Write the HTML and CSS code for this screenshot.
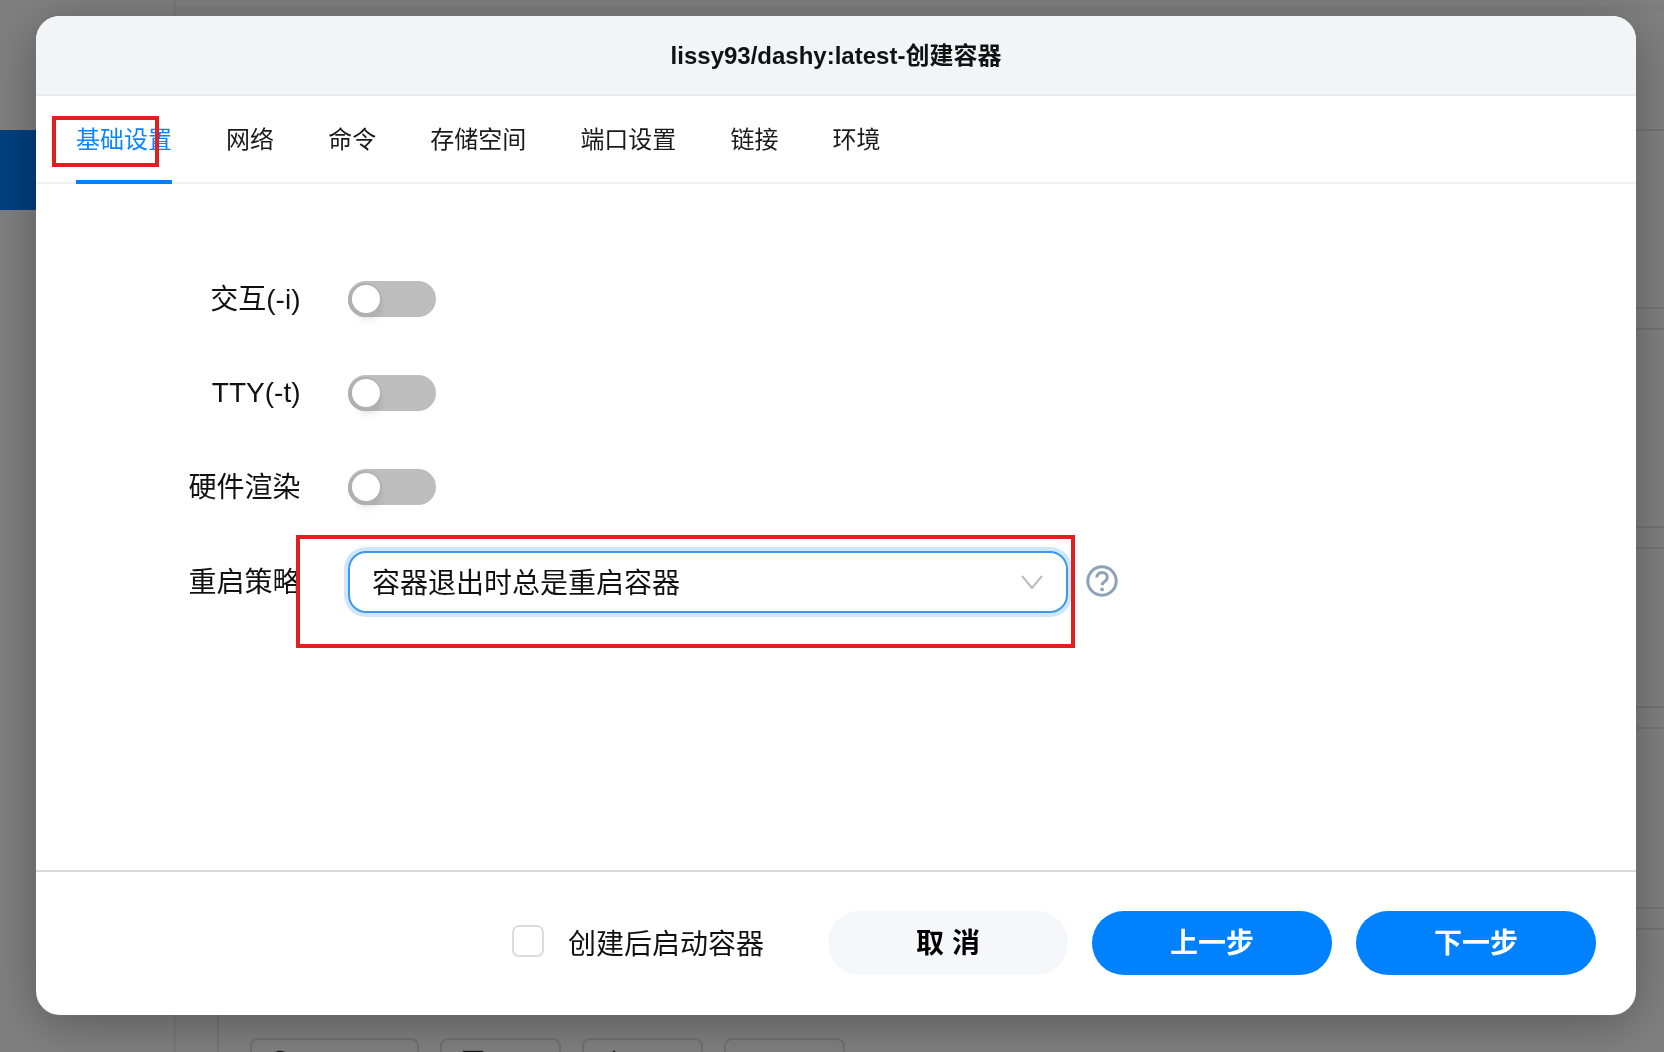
FILE: index.html
```html
<!DOCTYPE html>
<html lang="zh-CN">
<head>
<meta charset="utf-8">
<title>创建容器</title>
<link rel="stylesheet" href="styles.css">
</head>
<body>
<div class="page">
  <aside class="sidebar">
    <div class="nav-active"></div>
  </aside>
  <main class="main">
    <div class="top-strip"></div>
    <div class="rows">
      <div class="row-head"></div>
      <div class="row row-1"></div>
      <div class="row row-2"></div>
      <div class="row row-3"></div>
      <div class="row row-4"></div>
    </div>
    <div class="actions">
      <div class="ghost g1"><svg class="ghost-icon" viewBox="0 0 24 24"><circle cx="12" cy="12" r="9"/></svg></div>
      <div class="ghost g2"><svg class="ghost-icon" viewBox="0 0 24 24"><rect x="3" y="3" width="18" height="18"/></svg></div>
      <div class="ghost g3"><svg class="ghost-icon" viewBox="0 0 24 24"><path d="M12 3v18M5 10l7-7 7 7"/></svg></div>
      <div class="ghost g4"><svg class="ghost-icon faint" viewBox="0 0 24 24"><path d="M12 3v18"/></svg></div>
    </div>
  </main>
</div>

<div class="backdrop"></div>

<section class="modal">
  <header class="modal-head">lissy93/dashy:latest-创建容器</header>
  <nav class="tabs">
    <a class="tab active">基础设置</a>
    <a class="tab">网络</a>
    <a class="tab">命令</a>
    <a class="tab">存储空间</a>
    <a class="tab">端口设置</a>
    <a class="tab">链接</a>
    <a class="tab">环境</a>
  </nav>
  <div class="form">
    <div class="field">
      <label class="field-label">交互(-i)</label>
      <span class="switch"><span class="knob"></span></span>
    </div>
    <div class="field">
      <label class="field-label label-latin">TTY(-t)</label>
      <span class="switch"><span class="knob"></span></span>
    </div>
    <div class="field">
      <label class="field-label">硬件渲染</label>
      <span class="switch"><span class="knob"></span></span>
    </div>
    <div class="field field-select">
      <label class="field-label">重启策略</label>
      <div class="select">
        <span class="select-value">容器退出时总是重启容器</span>
        <svg class="chevron" viewBox="0 0 22 14"><path d="M1 1l10 12L21 1"/></svg>
      </div>
      <svg class="help" viewBox="0 0 32 32">
        <circle cx="16" cy="16" r="14.2"/>
        <path d="M10.8 12.6c0-3 2.3-5 5.3-5s5.2 1.9 5.2 4.6c0 2-1 3.1-2.7 4.2-1.7 1.1-2.5 1.9-2.5 3.9"/>
        <circle class="help-dot" cx="16.1" cy="24.4" r="1.9"/>
      </svg>
    </div>
  </div>
  <footer class="modal-foot">
    <span class="check"></span>
    <span class="check-text">创建后启动容器</span>
    <button class="btn btn-cancel">取 消</button>
    <button class="btn btn-primary">上一步</button>
    <button class="btn btn-primary">下一步</button>
  </footer>
  <div class="mark mark-tab"></div>
  <div class="mark mark-select"></div>
</section>
</body>
</html>
```
FILE: styles.css
```css
* { box-sizing: border-box; }
html, body { margin: 0; height: 100%; overflow: hidden; }
body {
  background: #fff;
  font-family: "Liberation Sans", "Noto Sans CJK SC", sans-serif;
  color: #000;
}

/* underlying page, dimmed by the backdrop */
.page { display: flex; height: 1052px; }
.sidebar { width: 176px; flex: none; border-right: 2px solid #f0f0f0; padding-top: 130px; }
.nav-active { width: 100%; height: 80px; background: #0081ff; }
.main { flex: 1; display: flex; flex-direction: column; position: relative; }
.main::before {
  content: "";
  position: absolute;
  left: 41px;
  top: 960px;
  bottom: 0;
  width: 2px;
  background: #ececec;
}
.top-strip { height: 9px; border-bottom: 2px solid #f4f4f4; }
.rows { padding-top: 120px; margin-left: 41px; }
.row-head { height: 2px; background: #e8e8e8; }
.row { height: 23px; border-top: 2px solid #e8e8e8; border-bottom: 2px solid #e8e8e8; }
.row-1 { margin-top: 176px; }
.row-2 { margin-top: 196px; }
.row-3 { margin-top: 157px; }
.row-4 { margin-top: 178px; }
.actions {
  margin-top: auto;
  margin-left: 41px;
  height: 14px;
  display: flex;
  gap: 21px;
  padding-left: 33px;
}
.ghost { height: 40px; border: 2px solid #e0e0e0; border-radius: 8px; padding-top: 9px; background: #fff; flex: none; }
.g1 { width: 169px; padding-left: 16px; }
.g2 { width: 121px; padding-left: 19px; }
.g3 { width: 121px; padding-left: 18px; }
.g4 { width: 121px; padding-left: 25px; }
.ghost-icon { width: 24px; height: 24px; fill: none; stroke: #333; stroke-width: 2.4; display: block; }
.ghost-icon.faint { stroke: #bbb; }

.backdrop { position: fixed; inset: 0; background: rgba(0, 0, 0, .5); }

/* modal */
.modal {
  position: fixed;
  left: 36px;
  top: 16px;
  width: 1600px;
  height: 999px;
  background: #fff;
  border-radius: 24px;
  box-shadow: 0 8px 48px rgba(0, 0, 0, .3);
  display: flex;
  flex-direction: column;
  overflow: hidden;
}
.modal-head {
  height: 80px;
  flex: none;
  background: #f2f4f8;
  border-bottom: 2px solid #e8eaee;
  padding-bottom: 4px;
  display: flex;
  align-items: center;
  justify-content: center;
  font-size: 24px;
  font-weight: 700;
  color: #111;
}
.tabs {
  height: 88px;
  flex: none;
  display: flex;
  gap: 54.1px;
  padding-left: 40px;
  border-bottom: 2px solid #f0f0f0;
}
.tab {
  height: 88px;
  line-height: 88px;
  font-size: 24px;
  color: #1a1a1a;
}
.tab.active {
  color: #0a84ff;
  border-bottom: 4px solid #0081ff;
}

.form { flex: 1; padding-top: 97px; }
.field { display: flex; align-items: center; height: 36px; margin-bottom: 58px; }
.field-label {
  width: 265px;
  flex: none;
  padding-right: .5px;
  padding-bottom: 5px;
  text-align: right;
  font-size: 28px;
  color: #111;
}
.label-latin { padding-bottom: 0; }
.field-select { height: 62px; margin-top: -12px; }
.switch {
  margin-left: 47px;
  width: 88px;
  height: 36px;
  border-radius: 18px;
  background: #bdbdbd;
  display: flex;
  align-items: center;
  padding-left: 4px;
}
.knob {
  width: 28px;
  height: 28px;
  border-radius: 50%;
  background: #fff;
  box-shadow: -1px 1px 0 3px #b0b0b0, 2px 9px 8px -3px rgba(0, 0, 0, .14);
}
.select {
  margin-left: 47px;
  width: 720px;
  height: 62px;
  flex: none;
  border: 2px solid #3d98ea;
  border-radius: 18px;
  box-shadow: 0 0 0 4px #cfe6ff;
  display: flex;
  align-items: center;
  justify-content: space-between;
  padding: 0 23px 0 22px;
  font-size: 28px;
  color: #111;
}
.select-value { padding-bottom: 3px; }
.chevron { width: 22px; height: 14px; fill: none; stroke: #bcbcbc; stroke-width: 2; }
.help { width: 32px; height: 32px; margin-left: 18px; margin-bottom: 3px; fill: none; stroke: #8ba2b8; stroke-width: 3; flex: none; }
.help-dot { fill: #8ba2b8; stroke: none; }

.modal-foot {
  height: 145px;
  flex: none;
  border-top: 2px solid #d8d8d8;
  display: flex;
  align-items: center;
  justify-content: flex-end;
  padding-right: 40px;
  padding-bottom: 2px;
}
.check {
  width: 32px;
  height: 32px;
  border: 2px solid #dcdcdc;
  border-radius: 7px;
  margin-right: 24px;
  margin-bottom: 3px;
}
.check-text { font-size: 28px; color: #111; margin-right: 64px; padding-bottom: 2px; }
.btn {
  width: 240px;
  height: 64px;
  border: 0;
  border-radius: 32px;
  font-family: inherit;
  font-size: 28px;
  font-weight: 700;
  margin-left: 24px;
  padding: 0 0 4px;
}
.btn-cancel { background: #f5f7fa; color: #000; margin-left: 0; }
.btn-primary { background: #0081ff; color: #fff; }

/* red annotation frames */
.mark { position: absolute; border: 4px solid #e02020; pointer-events: none; }
.mark-tab { left: 16px; top: 100px; width: 107px; height: 51px; }
.mark-select { left: 260px; top: 519px; width: 779px; height: 113px; }
```
